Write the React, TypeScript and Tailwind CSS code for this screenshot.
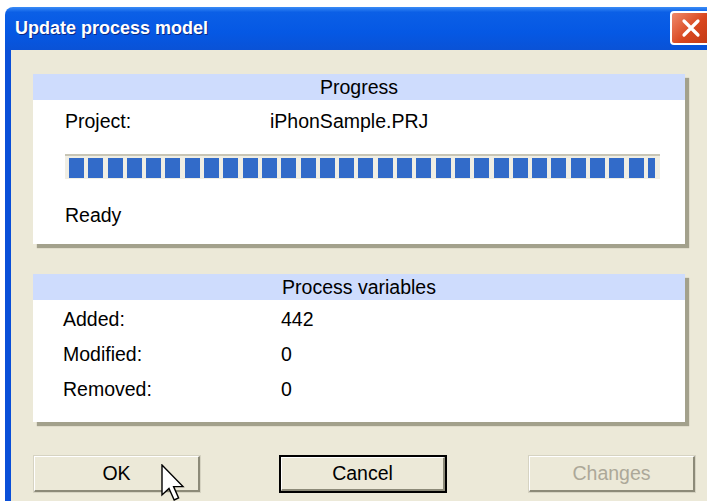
import React from "react";

const BLOCKS = 30;

function Panel({ title, children }: { title: string; children: React.ReactNode }) {
  return (
    <div className="w-[652px] bg-white shadow-[4px_4px_1px_#a3a18c]">
      <div className="h-[26px] bg-[#cedcfd] text-center leading-[26px]">{title}</div>
      {children}
    </div>
  );
}

function Row({ label, value }: { label: string; value: string }) {
  return (
    <div className="flex h-[35px] items-center">
      <span className="w-[218px]">{label}</span>
      <span>{value}</span>
    </div>
  );
}

function Button({ label, isDefault, disabled }: { label: string; isDefault?: boolean; disabled?: boolean }) {
  return (
    <button
      className={
        "h-[38px] w-[168px] bg-[#ece9d8] " +
        (isDefault ? "border-[2px] border-black" : "border border-[#d6d3c2]")
      }
    >
      <span
        className={
          "flex h-full w-full items-center justify-center border-t border-l border-t-white border-l-white border-r-[2px] border-b-[2px] border-r-[#8c8a78] border-b-[#8c8a78] " +
          (disabled ? "text-[#aca899]" : "text-black")
        }
      >
        {label}
      </span>
    </button>
  );
}

export default function App() {
  return (
    <div
      className="relative h-[501px] w-[707px] overflow-hidden bg-white text-[19.5px] text-black"
      style={{ fontFamily: '"Liberation Sans", Arial, sans-serif' }}
    >
      <div className="ml-[5px] mt-[7px] w-[730px]">
        {/* title bar */}
        <div className="flex h-[43px] items-center justify-between rounded-tl-[8px] bg-[linear-gradient(to_bottom,#3a8cf6_0%,#0b5fe6_12%,#0558e4_60%,#0a52d6_100%)] pl-[10px] pr-[23px]">
          <span className="text-[18px] font-bold text-white [text-shadow:1px_1px_0_#0a2a86]">
            Update process model
          </span>
          <div className="mt-[-2px] flex h-[34px] w-[42px] items-center justify-center rounded-[4px] border-2 border-white bg-[linear-gradient(135deg,#f08a6a,#d8461e_55%,#c23a14)]">
            <svg width="20" height="20" viewBox="0 0 20 20">
              <path d="M3 3 L17 17 M17 3 L3 17" stroke="white" strokeWidth="3.2" strokeLinecap="round" />
            </svg>
          </div>
        </div>

        {/* dialog body */}
        <div className="h-[460px] border-l-[6px] border-[#0a4fd8] bg-[#ece9d8] pl-[22px] pt-[24px]">
          <Panel title="Progress">
            <div className="px-[32px] pb-[14px]">
              <div className="flex h-[44px] items-center">
                <span className="w-[205px]">Project:</span>
                <span>iPhonSample.PRJ</span>
              </div>
              <div className="mt-[10px] h-[25px] w-[595px] border-t-2 border-[#c8c5b5] bg-[#f0eee4] pl-[4px] pt-[2px]">
                <div className="flex h-[20px] gap-[4.3px]">
                  {Array.from({ length: BLOCKS }).map((_, i) => (
                    <div key={i} className="h-full w-[15px] shrink-0 bg-[#326bc9]" />
                  ))}
                  <div className="h-full w-[7px] shrink-0 bg-[#326bc9]" />
                </div>
              </div>
              <div className="mt-[23px] flex h-[28px] items-center">Ready</div>
            </div>
          </Panel>

          <div className="mt-[30px]">
            <Panel title="Process variables">
              <div className="px-[30px] pb-[15px] pt-[2px]">
                <Row label="Added:" value="442" />
                <Row label="Modified:" value="0" />
                <Row label="Removed:" value="0" />
              </div>
            </Panel>
          </div>

          <div className="mt-[33px] flex">
            <Button label="OK" />
            <div className="ml-[78px]">
              <Button label="Cancel" isDefault />
            </div>
            <div className="ml-[81px]">
              <Button label="Changes" disabled />
            </div>
          </div>
        </div>
      </div>

      {/* mouse pointer over the OK button */}
      <svg className="absolute left-[161px] top-[464px]" width="26" height="38" viewBox="0 0 13 19">
        <path
          d="M0.5 0.5 L0.5 15.5 L4 12.2 L6.6 18 L8.8 17 L6.3 11.3 L11 11.3 Z"
          fill="white"
          stroke="black"
          strokeWidth="0.7"
          strokeLinejoin="miter"
        />
      </svg>
    </div>
  );
}
